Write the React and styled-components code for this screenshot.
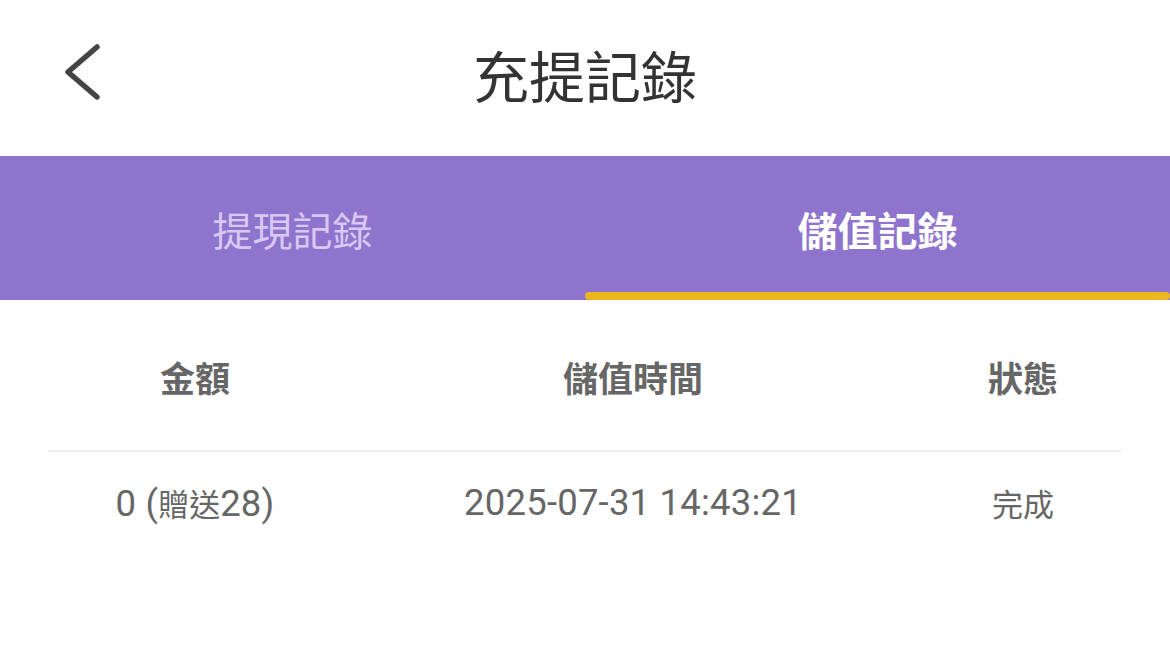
import React from "react";
import styled, { createGlobalStyle } from "styled-components";

const Global = createGlobalStyle`
  html, body { margin: 0; padding: 0; background: #fff; }
  body { font-family: Roboto, "Noto Sans CJK TC", sans-serif; }
  * { box-sizing: border-box; }
`;

const Page = styled.div`
  width: 1170px;
  height: 657px;
  background: #fff;
  display: flex;
  flex-direction: column;
  overflow: hidden;
`;

const Header = styled.header`
  position: relative;
  height: 156px;
  display: flex;
  align-items: center;
  justify-content: center;
`;

const BackButton = styled.button`
  position: absolute;
  left: 56px;
  top: 36px;
  width: 56px;
  height: 72px;
  padding: 0;
  border: 0;
  background: transparent;
  display: flex;
  align-items: center;
  justify-content: center;
`;

const Title = styled.h1`
  margin: 0 0 10px;
  font-family: "Noto Sans CJK TC", sans-serif;
  font-weight: 400;
  font-size: 56px;
  color: #333;
  letter-spacing: 0;
`;

const Tabs = styled.nav`
  height: 144px;
  background: #8f74cd;
  display: grid;
  grid-template-columns: 585px 585px;
`;

const Tab = styled.div`
  position: relative;
  display: flex;
  align-items: center;
  justify-content: center;
  padding-top: 2px;
  font-family: "Noto Sans CJK TC", sans-serif;
  font-size: 40px;
  font-weight: ${(p) => (p.$active ? 700 : 400)};
  color: ${(p) => (p.$active ? "#ffffff" : "#d8c8f4")};
  &::after {
    content: "";
    display: ${(p) => (p.$active ? "block" : "none")};
    position: absolute;
    left: 0;
    right: 0;
    bottom: 0;
    height: 8px;
    border-radius: 4px;
    background: #edb520;
  }
`;

const Table = styled.section`
  padding: 0 48px;
`;

const Row = styled.div`
  display: grid;
  grid-template-columns: 294px 582px 198px;
  align-items: center;
  height: ${(p) => p.$h}px;
  padding-top: ${(p) => p.$pt || 0}px;
  border-bottom: ${(p) => (p.$divider ? "2px solid #efefef" : "none")};
`;

const HeadCell = styled.div`
  text-align: center;
  font-family: "Noto Sans CJK TC", sans-serif;
  font-weight: 700;
  font-size: 35px;
  color: #666;
`;

const Cell = styled.div`
  text-align: center;
  font-family: Roboto, "Noto Sans CJK TC", sans-serif;
  font-size: 36.5px;
  letter-spacing: 0.2px;
  color: #666;
  white-space: nowrap;
`;

const Cjk = styled.span`
  font-family: "Noto Sans CJK TC", sans-serif;
  font-size: 31px;
  letter-spacing: 0;
`;

export default function App() {
  return (
    <Page>
      <Global />
      <Header>
        <BackButton aria-label="back">
          <svg width="56" height="72" viewBox="0 0 56 72">
            <polyline
              points="41,11 12,36 41,61"
              fill="none"
              stroke="#444"
              strokeWidth="5.5"
              strokeLinecap="round"
              strokeLinejoin="round"
            />
          </svg>
        </BackButton>
        <Title>充提記錄</Title>
      </Header>
      <Tabs>
        <Tab>提現記錄</Tab>
        <Tab $active>儲值記錄</Tab>
      </Tabs>
      <Table>
        <Row $h={152} $pt={2} $divider>
          <HeadCell>金額</HeadCell>
          <HeadCell>儲值時間</HeadCell>
          <HeadCell>狀態</HeadCell>
        </Row>
        <Row $h={98} $pt={3}>
          <Cell>
            0 (<Cjk>贈送</Cjk>28)
          </Cell>
          <Cell>2025-07-31 14:43:21</Cell>
          <Cell>
            <Cjk>完成</Cjk>
          </Cell>
        </Row>
      </Table>
    </Page>
  );
}
